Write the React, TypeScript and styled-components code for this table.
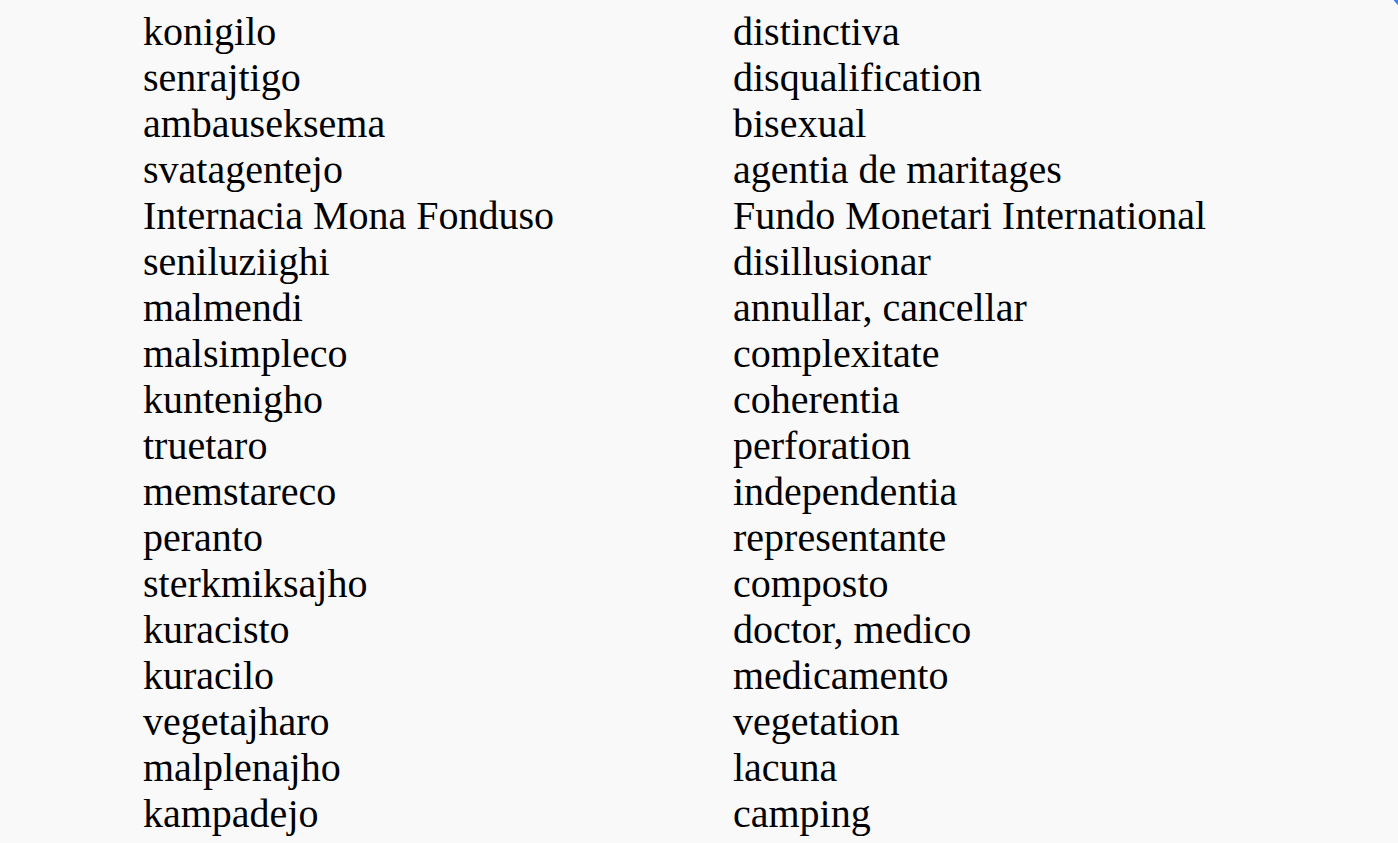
import React from 'react'
import styled, { createGlobalStyle } from 'styled-components'

const GlobalStyle = createGlobalStyle`
  html, body {
    margin: 0;
    padding: 0;
    background: #f9f9f9;
    overflow: hidden;
  }
`

const Page = styled.div`
  position: relative;
  width: 1398px;
  height: 843px;
  background: #f9f9f9;
  overflow: hidden;
`

const Table = styled.div`
  display: grid;
  grid-template-columns: 590px auto;
  padding: 9px 0 0 143px;
  font-family: 'Liberation Serif', 'Times New Roman', serif;
  font-size: 40px;
  line-height: 46px;
  color: #000;
`

const Cell = styled.div`
  white-space: nowrap;
`

// floating action button peeking in from the top-right corner
const CornerBadge = styled.div`
  position: absolute;
  top: -36px;
  right: -38px;
  width: 44px;
  height: 44px;
  border-radius: 50%;
  background: #3b82f6;
  border: 2px solid #fff;
`

const words: [string, string][] = [
  ['konigilo', 'distinctiva'],
  ['senrajtigo', 'disqualification'],
  ['ambauseksema', 'bisexual'],
  ['svatagentejo', 'agentia de maritages'],
  ['Internacia Mona Fonduso', 'Fundo Monetari International'],
  ['seniluziighi', 'disillusionar'],
  ['malmendi', 'annullar, cancellar'],
  ['malsimpleco', 'complexitate'],
  ['kuntenigho', 'coherentia'],
  ['truetaro', 'perforation'],
  ['memstareco', 'independentia'],
  ['peranto', 'representante'],
  ['sterkmiksajho', 'composto'],
  ['kuracisto', 'doctor, medico'],
  ['kuracilo', 'medicamento'],
  ['vegetajharo', 'vegetation'],
  ['malplenajho', 'lacuna'],
  ['kampadejo', 'camping'],
]

const App = () => (
  <Page>
    <GlobalStyle />
    <Table>
      {words.map(([eo, ia]) => (
        <React.Fragment key={eo}>
          <Cell>{eo}</Cell>
          <Cell>{ia}</Cell>
        </React.Fragment>
      ))}
    </Table>
    <CornerBadge />
  </Page>
)

export default App
